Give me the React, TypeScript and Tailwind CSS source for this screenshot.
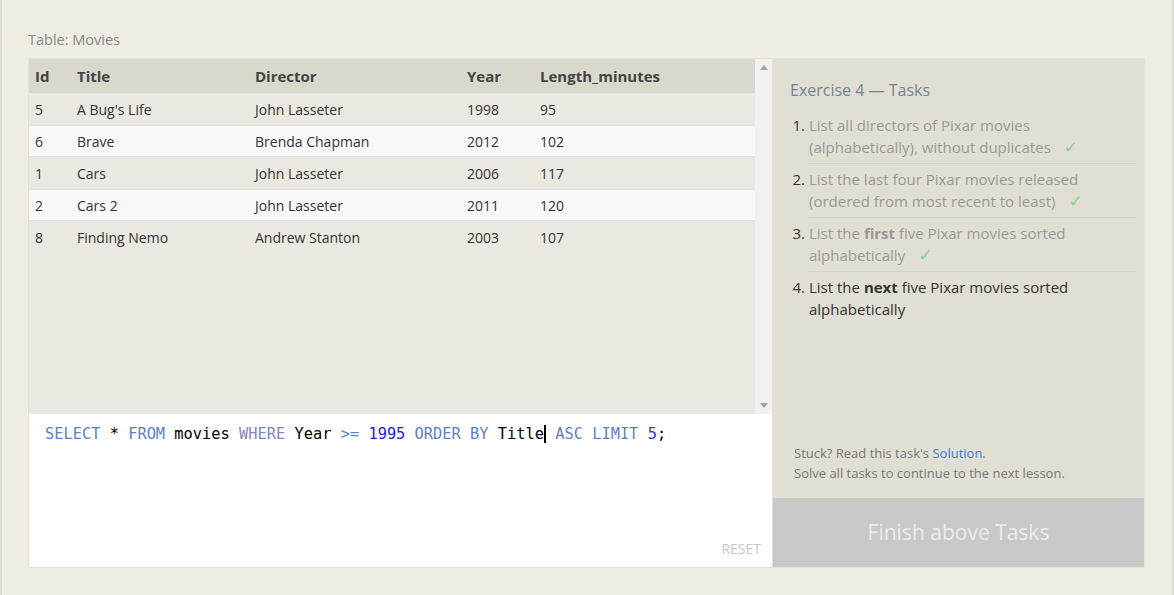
import React from "react";

const movies = [
  { id: 5, title: "A Bug's Life", director: "John Lasseter", year: 1998, length: 95 },
  { id: 6, title: "Brave", director: "Brenda Chapman", year: 2012, length: 102 },
  { id: 1, title: "Cars", director: "John Lasseter", year: 2006, length: 117 },
  { id: 2, title: "Cars 2", director: "John Lasseter", year: 2011, length: 120 },
  { id: 8, title: "Finding Nemo", director: "Andrew Stanton", year: 2003, length: 107 },
];

const cols = "grid grid-cols-[42px_178px_212px_73px_1fr]";

function Check() {
  return (
    <span
      className="ml-[13px] text-[17px] leading-[20px] text-[#8fd08f]"
      style={{ fontFamily: '"DejaVu Sans", sans-serif' }}
    >
      ✓
    </span>
  );
}

export default function App() {
  return (
    <div
      className="min-h-[595px] bg-[#efece4] border-x-2 border-[#dedbd3] pl-[26px] pr-[27px] pt-[30px] pb-[26px]"
      style={{ fontFamily: '"Open Sans", "Noto Sans", sans-serif' }}
    >
      <div className="text-[14.5px] leading-[20px] text-[#888] mb-[8px]">Table: Movies</div>

      <div className="flex border border-[#e4e2d8] h-[510px]">
        {/* left column: result table + editor */}
        <div className="w-[743px] flex flex-col">
          <div className="flex h-[355px] bg-[#eae9e1]">
            <div className="flex-1 text-[14px] text-[#333]">
              <div className={`${cols} h-[34px] items-center bg-[#d9d8cc] font-bold text-[15px] text-[#444]`}>
                <div className="pl-[6px]">Id</div>
                <div className="pl-[6px]">Title</div>
                <div className="pl-[6px]">Director</div>
                <div className="pl-[6px]">Year</div>
                <div className="pl-[6px]">Length_minutes</div>
              </div>
              {movies.map((m, i) => (
                <div
                  key={m.id}
                  className={`${cols} h-[32px] items-center ${
                    i % 2 === 1 ? "bg-[#f8f8f8] border-y border-[#e3e3e3]" : "bg-[#eae9e1]"
                  }`}
                >
                  <div className="pl-[6px]">{m.id}</div>
                  <div className="pl-[6px]">{m.title}</div>
                  <div className="pl-[6px]">{m.director}</div>
                  <div className="pl-[6px]">{m.year}</div>
                  <div className="pl-[6px]">{m.length}</div>
                </div>
              ))}
            </div>
            <div className="w-[17px] bg-[#f1f1f1] flex flex-col justify-between items-center py-[6px]">
              <svg width="8" height="5" viewBox="0 0 8 5">
                <path d="M0 5 L4 0 L8 5 Z" fill="#a3a3a3" />
              </svg>
              <svg width="8" height="5" viewBox="0 0 8 5">
                <path d="M0 0 L4 5 L8 0 Z" fill="#a3a3a3" />
              </svg>
            </div>
          </div>

          <div className="flex-1 bg-white flex flex-col pl-[16px] pr-[11px] pt-[10px] pb-[9px]">
            <div
              className="text-[15.35px] leading-[20px] text-black whitespace-pre"
              style={{ fontFamily: '"DejaVu Sans Mono", "Liberation Mono", monospace' }}
            >
              <span className="text-[#5f7fc8]">SELECT</span> * <span className="text-[#5f7fc8]">FROM</span> movies{" "}
              <span className="text-[#7f86c4]">WHERE</span> Year <span className="text-[#5f7fc8]">&gt;=</span>{" "}
              <span className="text-[#1e22e6]">1995</span> <span className="text-[#5f7fc8]">ORDER BY</span> Title
              <span className="inline-block w-[2px] h-[18px] bg-black align-[-4px]" />{" "}
              <span className="text-[#5f7fc8]">ASC</span> <span className="text-[#5f7fc8]">LIMIT</span>{" "}
              <span className="text-[#3338c8]">5</span>;
            </div>
            <div className="flex-1" />
            <div className="text-right text-[14px] leading-[18px] text-[#c8c8c8]">RESET</div>
          </div>
        </div>

        {/* right column: tasks */}
        <div className="flex-1 bg-[#e1dfd4] flex flex-col border-l border-[#e4e2d8]">
          <div className="pl-[17px] pr-[7px] pt-[20px]">
            <div className="text-[16px] leading-[22px] text-[#7b8193] mb-[9px]">Exercise 4 — Tasks</div>
            <ol className="text-[15px] leading-[22px]">
              {[
                { n: 1, body: <>List all directors of Pixar movies (alphabetically), without duplicates<Check /></>, done: true },
                { n: 2, body: <>List the last four Pixar movies released (ordered from most recent to least)<Check /></>, done: true },
                { n: 3, body: <>List the <b>first</b> five Pixar movies sorted alphabetically<Check /></>, done: true },
                { n: 4, body: <>List the <b>next</b> five Pixar movies sorted alphabetically</>, done: false },
              ].map((t) => (
                <li key={t.n} className="flex">
                  <span className="w-[15px] shrink-0 text-right pt-[4px] text-[#333]">{t.n}.</span>
                  <div
                    className={`flex-1 ml-[3px] pl-[1px] pt-[4px] pb-[5px] pr-[8px] ${
                      t.done ? "text-[#999] border-b border-[#d5d3c8]" : "text-[#333]"
                    }`}
                  >
                    {t.body}
                  </div>
                </li>
              ))}
            </ol>
          </div>
          <div className="flex-1" />
          <div className="pl-[21px] text-[13px] leading-[20px] text-[#777] mb-[15px]">
            <div>
              Stuck? Read this task's <span className="text-[#3f7bd8]">Solution</span>.
            </div>
            <div>Solve all tasks to continue to the next lesson.</div>
          </div>
          <div className="h-[69px] bg-[#c8c8c8] flex items-center justify-center text-[21px] text-[#ececec]">
            Finish above Tasks
          </div>
        </div>
      </div>
    </div>
  );
}
